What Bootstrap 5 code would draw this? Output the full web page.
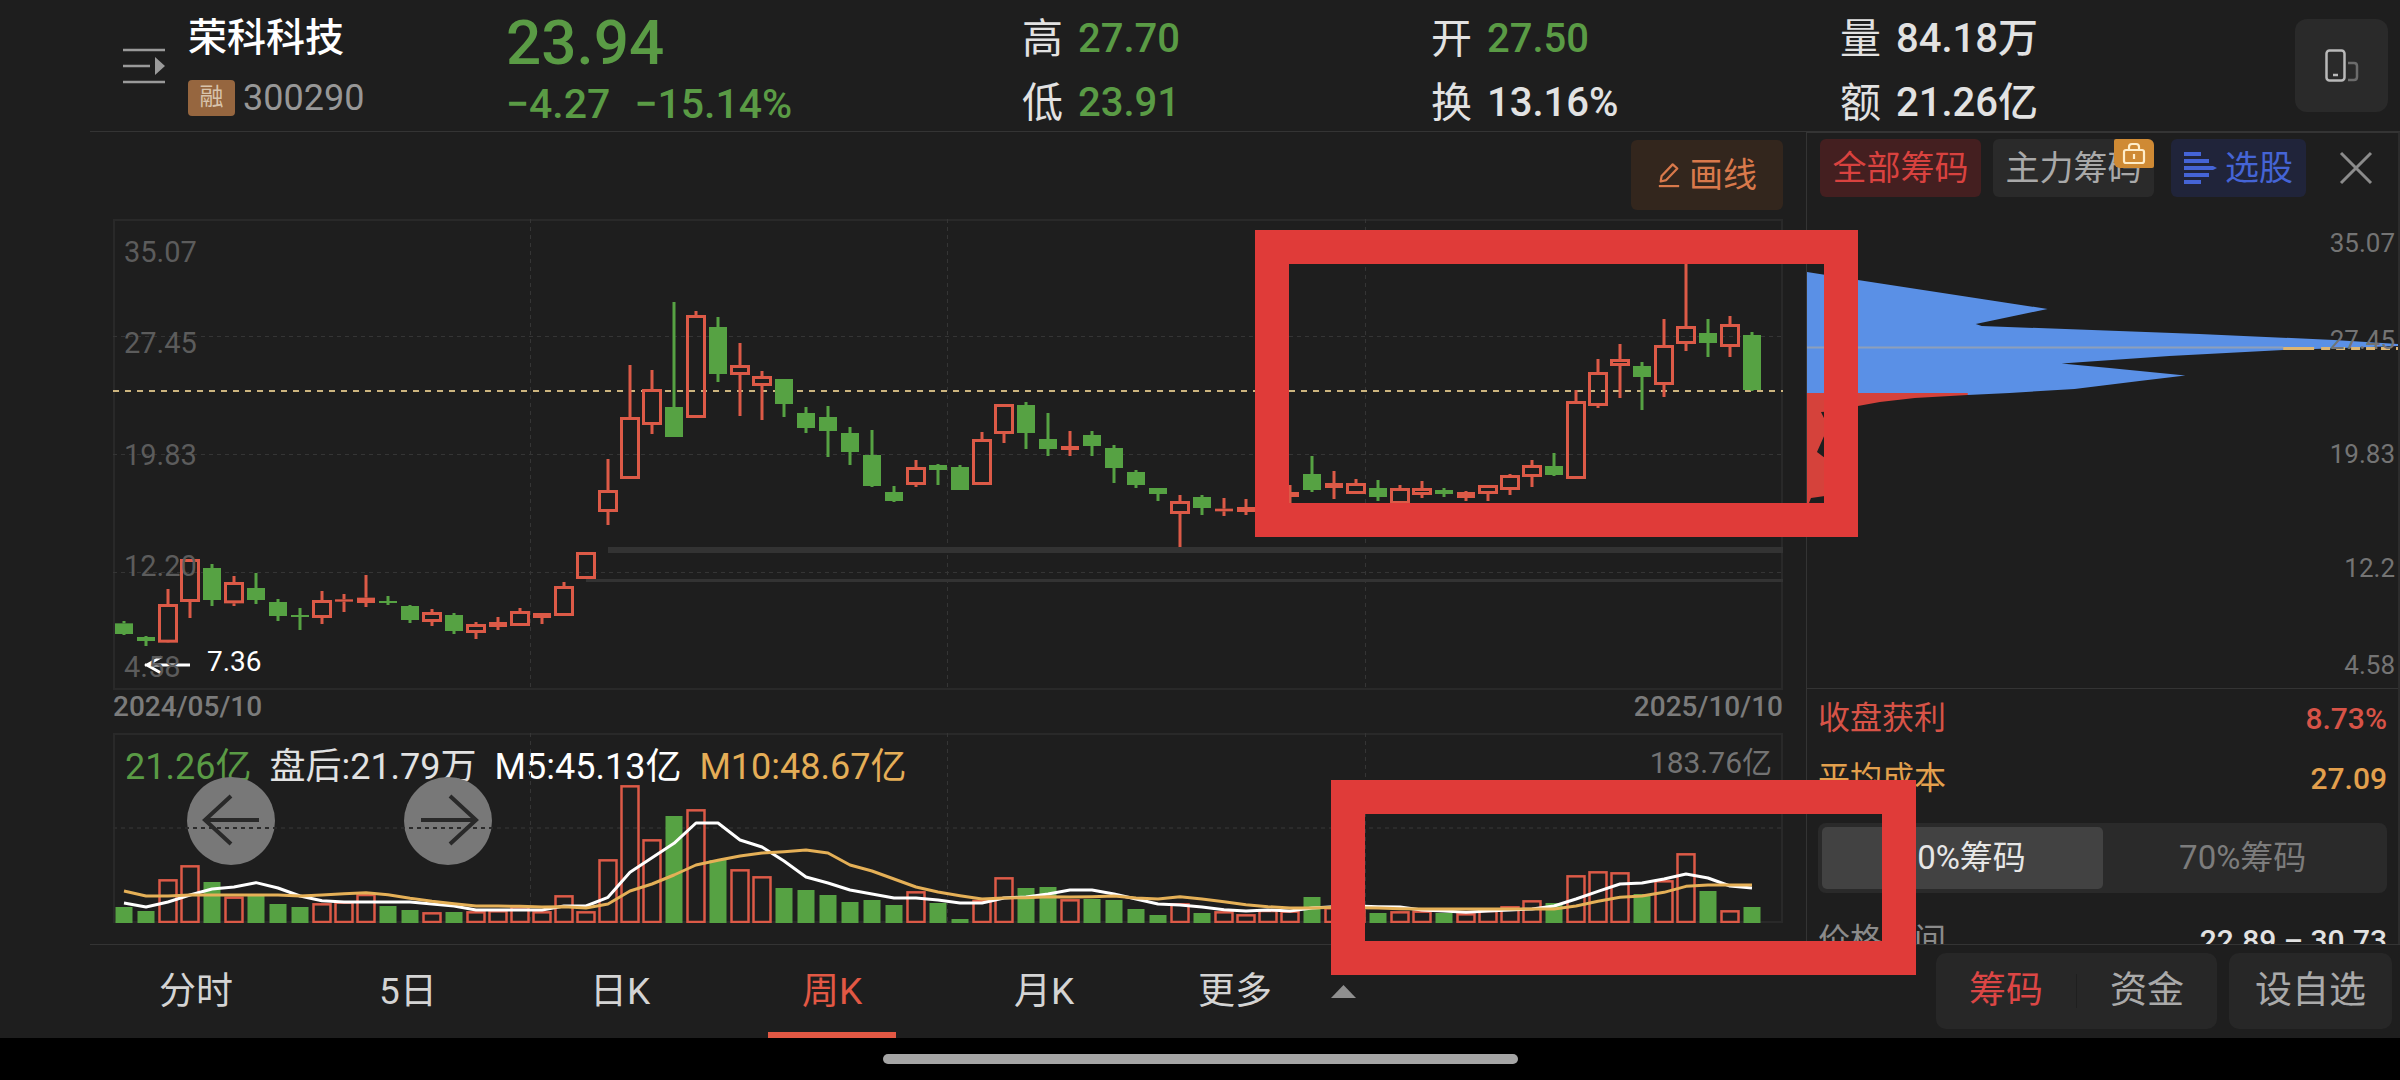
<!DOCTYPE html>
<html lang="zh-CN">
<head>
<meta charset="utf-8">
<meta name="viewport" content="width=device-width, initial-scale=1">
<title>荣科科技 300290 周K</title>
<link href="https://cdn.jsdelivr.net/npm/bootstrap@5.3.0/dist/css/bootstrap.min.css" rel="stylesheet">
<style>
:root{--bg:#1e1e1e;--line:#343434;--green:#5a9b45;--red:#e25844;--gold:#e5ae57}
body{background:#000;color:#e2e2e2;font-family:Roboto,"Noto Sans CJK SC",sans-serif;font-size:36px;line-height:40px;min-height:100vh}
button{font-family:inherit;line-height:40px}
.app{background:var(--bg);position:relative}
.quote-head{height:132px;padding-left:90px}
.quote-head::after{content:"";position:absolute;left:90px;right:0;top:131px;height:1px;background:var(--line)}
.menu-btn{width:98px;padding:0 0 0 33px}
.stock{width:320px;padding-top:18px}
.stock-name{font-size:39px;font-weight:500;color:#fff}
.margin-tag{background:#96663f;color:#d8c3ac;font-size:24px;width:47px;height:36px;line-height:34px;border-radius:4px;text-align:center}
.code{color:#979797;font-size:36px}
.last{width:514px;color:var(--green);font-weight:500}
.last-big{font-size:62px;line-height:64px;padding-top:11px;margin-left:-2px}
.last-sub{font-size:41px;line-height:40px;padding-top:9px;margin-left:-2px}
.quad{width:409px;padding-top:7px;line-height:64px;font-size:40px}
.quad dt{font-weight:400;width:56px;font-size:41px}
.quad dd{font-weight:500}
.up{color:var(--green)}
.split-btn{width:93px;height:93px;border-radius:12px;background:#2a2a2a;margin:19px 12px 0 auto}
.left-pane{padding:8px 23px 0 113px;min-width:0}
.draw-btn{background:#33261d;color:#d9794b;font-size:34px;height:70px;width:152px;border-radius:6px}
.chart-price{height:471px;margin-top:9px}
.chart-vol{height:190px}
.chart-price svg,.chart-vol svg{width:100%;height:100%;display:block}
.ylab{position:absolute;left:11px;font-size:29px;line-height:30px;color:#5c5c5c}
.low-tag{position:absolute;left:94px;top:427px;font-size:28px;line-height:32px;color:#fff}
.dates{height:43px;line-height:34px;font-size:28px;font-weight:500;color:#7b7b7b}
.legend-row{position:absolute;left:12px;top:14px;gap:18px}
.vol-max{position:absolute;right:11px;top:10px;font-size:30px;color:#737373}
.pan{position:absolute;top:44px;width:88px;height:88px;border-radius:50%;background:#787878}
.pan-l{left:74px}.pan-r{left:291px}
.side-pane{width:594px;border-left:1px solid var(--line);border-right:2px solid #2c2c2c;border-top:1px solid var(--line);height:812px;overflow:hidden}
.chip-bar{height:58px;margin:6px 25px 0 13px}
.chip{height:58px;border-radius:6px;font-size:34px;background:#2a2a2a;color:#a9a9a9;width:161px}
.chip-on{background:#441f20;color:#d9423f}
.chip-pick{background:#20243a;color:#4564d6;width:135px;margin-left:17px}
.lock{position:absolute;right:0;top:0;width:40px;height:29px;background:#cf8a34;border-radius:2px 6px 2px 6px;line-height:0}
.profile{height:491px;position:relative}
.profile svg{width:100%;height:100%;display:block}
.rlab{position:absolute;right:3px;font-size:26px;line-height:30px;color:#747474}
.info{border-top:1px solid var(--line);padding:10px 11px 0}
.kv{height:60px;font-size:32px;line-height:38px}
.kv b{font-weight:500;font-size:30px;line-height:40px}
.range{background:#2a2a2a;border-radius:8px;padding:4px;height:70px;margin-top:4px}
.range button{font-size:33px;color:#7c7c7c;border-radius:5px}
.range .sel{background:#424242;color:#e6e6e6}
.tabs{height:94px;padding-left:90px;position:relative}
.tabs::before{content:"";position:absolute;left:90px;right:0;top:0;height:1px;background:var(--line)}
.tabs .ktab{width:212px;height:94px;font-size:37px;line-height:96px;color:#d4d4d4;text-align:center;text-decoration:none;position:relative}
.tabs .ktab.sel{color:var(--red)}
.ktab.sel::after{content:"";position:absolute;left:42px;right:42px;bottom:0;height:6px;background:var(--red)}
.ktab.more-tab{padding-right:42px}
.more-tab svg{position:absolute;right:6px;top:41px}
.foot-btn{background:#272727;border-radius:10px;height:76px;margin-top:9px;font-size:37px;color:#aaa}
.foot-btn button{color:inherit;font-size:inherit}
.foot-btn .sel{color:#dc4645}
.foot-pair{width:281px}
.foot-add{width:163px;margin:9px 8px 0 12px}
.sep{width:1px;height:34px;background:#1f1f1f}
.home{height:42px;padding-top:16px}
.home div{width:635px;height:10px;border-radius:5px;background:#a5a5a5}
.mark-box{position:absolute;border:34px solid #e03b39;z-index:5;pointer-events:none}
.mark-a{right:542px;top:230px;width:603px;height:307px}
.mark-b{right:484px;top:780px;width:585px;height:195px}
</style>
<script src="https://cdn.jsdelivr.net/npm/bootstrap@5.3.0/dist/js/bootstrap.bundle.min.js"></script>
</head>
<body>
<div class="app">
  <header class="quote-head d-flex">
    <button class="menu-btn btn border-0 text-start" aria-label="列表">
      <svg width="42" height="36" viewBox="0 0 42 36"><path d="M0 2H42M0 18H27M0 34H42" stroke="#9a9a9a" stroke-width="2.5"/><path d="M32 9L42 18L32 27Z" fill="#9a9a9a"/></svg>
    </button>
    <div class="stock">
      <div class="stock-name">荣科科技</div>
      <div class="d-flex align-items-center gap-2 mt-3 pt-1"><span class="margin-tag">融</span><span class="code">300290</span></div>
    </div>
    <div class="last">
      <div class="last-big">23.94</div>
      <div class="last-sub d-flex"><span class="me-4">−4.27</span><span>−15.14%</span></div>
    </div>
    <dl class="quad mb-0">
      <div class="d-flex"><dt>高</dt><dd class="up mb-0">27.70</dd></div>
      <div class="d-flex"><dt>低</dt><dd class="up mb-0">23.91</dd></div>
    </dl>
    <dl class="quad mb-0">
      <div class="d-flex"><dt>开</dt><dd class="up mb-0">27.50</dd></div>
      <div class="d-flex"><dt>换</dt><dd class="mb-0">13.16%</dd></div>
    </dl>
    <dl class="quad mb-0">
      <div class="d-flex"><dt>量</dt><dd class="mb-0">84.18万</dd></div>
      <div class="d-flex"><dt>额</dt><dd class="mb-0">21.26亿</dd></div>
    </dl>
    <button class="split-btn btn border-0 p-0" aria-label="分屏">
      <svg width="34" height="34" viewBox="0 0 34 34" fill="none"><rect x="1.5" y="1.5" width="18" height="30" rx="3" stroke="#b9b9b9" stroke-width="2.5"/><path d="M8 26H13" stroke="#b9b9b9" stroke-width="2.5"/><path d="M23 14H29Q32 14 32 17V28Q32 31 29 31H23" stroke="#6c6c6c" stroke-width="2.5"/></svg>
    </button>
  </header>

  <main class="d-flex">
    <section class="left-pane flex-grow-1">
      <div class="d-flex justify-content-end">
        <button class="draw-btn btn border-0 p-0 d-flex align-items-center justify-content-center gap-2">
          <svg width="24" height="28" viewBox="0 0 26 28" fill="none" stroke="#d9794b" stroke-width="2.4"><path d="M4 21L5 15L17 2.5L22 7L10 19.5Z" stroke-linejoin="round"/><path d="M2 26H24"/></svg>画线</button>
      </div>
      <div class="chart-price position-relative">
        <svg id="price" viewBox="0 0 1670 471" preserveAspectRatio="none" role="img" aria-label="周K线"></svg>
        <span class="ylab" style="top:18px">35.07</span><span class="ylab" style="top:109px">27.45</span><span class="ylab" style="top:221px">19.83</span><span class="ylab" style="top:332px">12.20</span><span class="ylab" style="top:433px">4.58</span>
        <span class="low-tag">7.36</span>
      </div>
      <div class="dates d-flex justify-content-between"><span>2024/05/10</span><span>2025/10/10</span></div>
      <div class="chart-vol position-relative">
        <div class="legend-row d-flex text-nowrap"><span class="up">21.26亿</span><span>盘后:21.79万</span><span class="text-white">M5:45.13亿</span><span style="color:var(--gold)">M10:48.67亿</span></div>
        <span class="vol-max">183.76亿</span>
        <button class="pan pan-l btn border-0 p-0" aria-label="左移"><svg width="88" height="88" viewBox="0 0 88 88" fill="none" stroke="#292929" stroke-width="4"><path d="M72 43H18M44 19L18 43L44 67"/></svg></button>
        <button class="pan pan-r btn border-0 p-0" aria-label="右移"><svg width="88" height="88" viewBox="0 0 88 88" fill="none" stroke="#292929" stroke-width="4"><path d="M17 43H71M46 19L72 43L46 67"/></svg></button>
        <svg id="vol" class="position-relative pe-none" viewBox="0 0 1670 190" preserveAspectRatio="none" role="img" aria-label="成交额"></svg>
      </div>
    </section>

    <aside class="side-pane flex-shrink-0">
      <div class="chip-bar d-flex">
        <button class="chip chip-on btn border-0 p-0 me-2">全部筹码</button>
        <button class="chip btn border-0 p-0 position-relative ms-1">主力筹码<span class="lock"><svg width="40" height="29" viewBox="0 0 40 29" fill="none" stroke="#ffedc9" stroke-width="2.2"><rect x="10" y="11" width="20" height="13" rx="2"/><path d="M15 11V8Q15 5 18 5H22Q25 5 25 8V11M20 15V20"/></svg></span></button>
        <button class="chip chip-pick btn border-0 p-0 d-flex align-items-center justify-content-center gap-2">
          <svg width="33" height="32" viewBox="0 0 33 32" fill="#4564d6"><path d="M0 0H17V4H0ZM0 7H25V11H0ZM0 14H29L33 16L29 18H0ZM0 21H25V25H0ZM0 28H17V32H0Z"/></svg>选股</button>
        <button class="btn border-0 p-0 ms-auto" aria-label="关闭"><svg width="34" height="34" viewBox="0 0 34 34" stroke="#8b8b8b" stroke-width="3"><path d="M2 2L32 32M32 2L2 32"/></svg></button>
      </div>
      <div class="profile">
        <svg viewBox="1807 197 592 491" preserveAspectRatio="none" role="img" aria-label="筹码分布">
          <path d="M1807 272L1858 280L2048 309L1976 324L1982 326L2200 334L2335 340L2400 344V346L2284 350L2170 356L2062 363.5L2110 368L2186 375.5L2140 381L2075 389L2010 393L1968 395L1807 394Z" fill="#5a90e6"/>
          <path d="M1807 393H1968V395L1915 398L1880 402L1858 406L1838 411L1821 412L1825 420V434L1817 452L1825 458V496L1811 498L1809 503H1807Z" fill="#d5423b"/>
          <path d="M1807 347.5H2284" stroke="#8e9fb9" stroke-width="2"/>
          <path d="M2284 348.5H2315" stroke="#dcb573" stroke-width="3"/><path d="M2322 348.5H2400" stroke="#dcb573" stroke-width="3" stroke-dasharray="9 6"/>
        </svg>
        <span class="rlab" style="top:31px">35.07</span><span class="rlab" style="top:128px">27.45</span><span class="rlab" style="top:242px">19.83</span><span class="rlab" style="top:356px">12.2</span><span class="rlab" style="top:453px">4.58</span>
      </div>
      <div class="info">
        <div class="kv d-flex justify-content-between" style="color:#d75347"><span>收盘获利</span><b>8.73%</b></div>
        <div class="kv d-flex justify-content-between" style="color:#e3a04d"><span>平均成本</span><b>27.09</b></div>
        <div class="range d-flex"><button class="sel btn border-0 p-0 col-6">90%筹码</button><button class="btn border-0 p-0 col-6">70%筹码</button></div>
        <div class="kv d-flex justify-content-between mt-4 pt-1"><span style="color:#8b8b8b">价格区间</span><b>22.89 – 30.73</b></div>
      </div>
    </aside>
  </main>

  <nav class="tabs d-flex">
    <a class="ktab" href="#">分时</a><a class="ktab" href="#">5日</a><a class="ktab" href="#">日K</a><a class="ktab sel" href="#">周K</a><a class="ktab" href="#">月K</a>
    <a class="ktab more-tab" href="#">更多<svg width="25" height="13" viewBox="0 0 25 13"><path d="M12.5 0L25 13H0Z" fill="#8f8f8f"/></svg></a>
    <div class="foot-btn foot-pair d-flex align-items-center ms-auto"><button class="sel btn border-0 p-0 flex-fill">筹码</button><span class="sep"></span><button class="btn border-0 p-0 flex-fill">资金</button></div>
    <button class="foot-btn foot-add btn border-0 p-0">设自选</button>
  </nav>
  <div class="mark-box mark-a"></div>
  <div class="mark-box mark-b"></div>
</div>
<footer class="home d-flex justify-content-center"><div></div></footer>

<script>
// Each candle: direction, high, body top, body bottom, low (thirds of a pixel below the toolbar)
const candles = `g1233,1240,1272,1275 g1278,1281,1293,1308 r1137,1182,1298,1299 r1047,1047,1176,1224 g1062,1074,1170,1188 r1098,1116,1180,1188 g1089,1134,1170,1182 g1167,1176,1218,1233 g1194,1215,1221,1260 r1143,1170,1224,1242 r1152,1168,1175,1206 r1095,1163,1179,1191 g1158,1173,1179,1185 g1185,1188,1230,1239 r1197,1206,1236,1248 g1209,1215,1263,1272 r1236,1242,1269,1287 r1221,1236,1251,1260 r1194,1203,1248,1248 r1209,1209,1224,1242 r1116,1128,1218,1218 r1026,1026,1107,1107 r747,840,906,945 r465,621,807,807 r480,537,645,672 g276,591,681,681 r303,315,624,624 g321,351,492,516 r399,465,495,618 r483,498,528,630 g507,507,582,621 g591,609,654,669 g588,621,663,741 g651,669,726,765 g660,735,828,831 g828,846,873,876 r750,771,825,831 g762,765,780,825 g765,771,840,840 r666,687,825,825 r582,582,672,699 g576,585,669,717 g609,687,717,738 r663,708,720,738 g663,675,708,738 g705,714,774,819 g780,786,825,834 g834,834,852,873 r855,873,912,1011 g855,861,894,915 r864,896,904,918 r867,891,906,915 r860,880,895,905 r825,846,861,885 g738,792,840,846 r783,819,834,867 r807,819,852,852 g810,834,861,873 r825,834,882,882 r813,834,855,864 g834,840,852,861 r843,846,864,873 r825,825,852,873 r792,795,840,855 r750,765,801,831 g729,768,795,798 r540,573,807,807 r447,486,588,594 r402,447,468,564 g456,468,501,600 r327,405,525,561 r150,348,402,423 g327,369,399,441 r318,342,411,441 g366,375,540,543`.split(' ');
const tops = [681,693,598,556,606,650,645,672,681,670,665,642,678,690,697,696,694,691,679,694,646,694,538,316,478,408,388,540,568,589,624,630,645,666,660,675,634,669,717,660,592,624,621,658,657,660,687,705,670,699,694,703,690,692,651,682,690,699,694,692,699,700,690,679,661,669,586,574,577,642,601,520,633,691,681];
const m5 = [669,681,666,645,627,621,608,624,648,662,666,666,666,666,672,678,690,690,690,690,678,678,652,577,533,490,429,429,480,501,543,591,609,630,642,654,654,660,669,669,654,651,642,630,630,642,657,672,675,681,689,693,690,693,684,680,678,680,681,690,693,697,693,690,687,678,657,634,612,609,597,582,594,618,624];
const m10 = [633,648,648,645,645,645,645,645,648,645,641,638,644,655,664,671,678,678,679,681,680,684,672,633,612,585,555,541,528,519,515,510,519,555,573,597,621,636,647,657,654,653,650,651,650,648,654,657,650,657,665,674,680,684,684,682,683,684,686,687,687,687,687,687,687,687,678,664,652,648,637,619,615,615,615];
const X = i => 11 + 22 * i, G = '#56a243', R = '#dc5a47';
const line = (x1,y1,x2,y2,c,w,d='') => `<line x1="${x1}" y1="${y1}" x2="${x2}" y2="${y2}" stroke="${c}" stroke-width="${w}" ${d ? `stroke-dasharray="${d}"` : ''}/>`;
const box = (x,y,w,h,f,s='none',sw=0) => `<rect x="${x}" y="${y}" width="${w}" height="${h}" fill="${f}" stroke="${s}" stroke-width="${sw}"/>`;

let p = box(1,1,1668,469,'none','#292929',2);
[417.5,834.5,1252.5].forEach(x => p += line(x,0,x,471,'#353535',1,'4 4'));
[117.5,235.5,353.5].forEach(y => p += line(0,y,1670,y,'#353535',1,'4 4'));
p += box(495,328,1175,6,'#333') + box(473,360,1197,3,'#333');
p += line(0,172,1670,172,'#cdb57f',2,'6 6');
candles.forEach((s,i) => {
  const up = s[0] === 'r', [h,t,b,l] = s.slice(1).split(',').map(v => v/3 - 9), x = X(i), c = up ? R : G;
  p += line(x,h,x,t,c,3) + line(x,b,x,l,c,3);
  const bh = Math.max(b-t, 2);
  p += (up && bh > 6) ? box(x-8.5,t+1.5,17,bh-3,'none',c,3) : box(x-9,t,18,bh,c);
});
p += '<path d="M77 446H32M48 438L34 446L48 454" fill="none" stroke="#fff" stroke-width="3"/>';
document.getElementById('price').innerHTML = p;

let v = box(1,1,1668,188,'none','#292929',2);
[417.5,834.5,1252.5].forEach(x => v += line(x,0,x,190,'#353535',1,'4 4'));
v += line(0,95,1670,95,'#2b2b2b',2,'4 4');
tops.forEach((t,i) => {
  const y = t/3 - 53, x = X(i);
  v += candles[i][0] === 'r' ? box(x-8.5,y+1,17,190-y-2,'none',R,2.5) : box(x-8.5,y,17,190-y,G);
});
const poly = (a,c) => `<polyline fill="none" stroke="${c}" stroke-width="3" stroke-linejoin="round" points="${a.map((t,i) => X(i)+','+(t/3-53)).join(' ')}"/>`;
v += poly(m5,'#fff') + poly(m10,'#e5b057');
document.getElementById('vol').innerHTML = v;
</script>
</body>
</html>
